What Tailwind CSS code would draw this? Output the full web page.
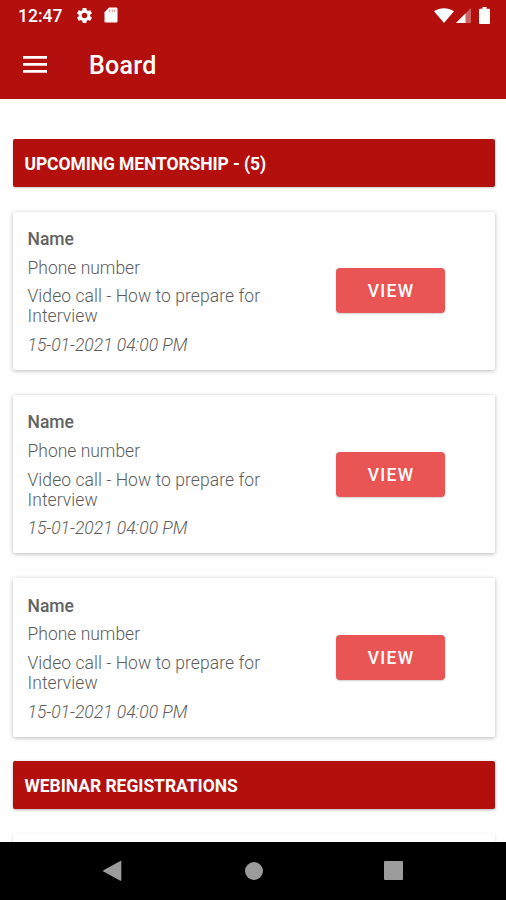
<!DOCTYPE html>
<html lang="en">
<head>
<meta charset="utf-8">
<title>Board</title>
<script src="https://cdn.jsdelivr.net/npm/@tailwindcss/browser@4"></script>
</head>
<body class="flex h-[900px] w-[506px] flex-col overflow-hidden bg-[#fefefe] font-[Roboto,sans-serif]">
<header class="h-[98.5px] shrink-0 bg-[#b30f0d] text-white">
  <div class="flex h-8 items-center pl-[18px] pr-[16px]">
    <span class="w-[57px] text-[17.5px] font-medium leading-8 whitespace-nowrap">12:47</span>
    <svg class="relative -top-px size-[19px]" viewBox="0 0 24 24" fill="currentColor"><path d="M19.14 12.94c.04-.3.06-.61.06-.94 0-.32-.02-.64-.07-.94l2.03-1.58c.18-.14.23-.41.12-.61l-1.92-3.32c-.12-.22-.37-.29-.59-.22l-2.39.96c-.5-.38-1.03-.7-1.62-.94l-.36-2.54c-.04-.24-.24-.41-.48-.41h-3.84c-.24 0-.43.17-.47.41l-.36 2.54c-.59.24-1.13.57-1.62.94l-2.39-.96c-.22-.08-.47 0-.59.22L2.74 8.87c-.12.21-.08.47.12.61l2.03 1.58c-.05.3-.09.63-.09.94s.02.64.07.94l-2.03 1.58c-.18.14-.23.41-.12.61l1.92 3.32c.12.22.37.29.59.22l2.39-.96c.5.38 1.03.7 1.62.94l.36 2.54c.05.24.24.41.48.41h3.84c.24 0 .44-.17.47-.41l.36-2.54c.59-.24 1.13-.56 1.62-.94l2.39.96c.22.08.47 0 .59-.22l1.92-3.32c.12-.22.07-.47-.12-.61l-2.01-1.58zM12 15.6c-1.98 0-3.6-1.62-3.6-3.6s1.62-3.6 3.6-3.6 3.6 1.62 3.6 3.6-1.62 3.6-3.6 3.6z"/></svg>
    <svg class="relative -top-px ml-[9.5px] h-4 w-[14px]" viewBox="0 0 14 16"><path d="M5 .5h7.200a1.300 1.300 0 0 1 1.300 1.300v12.400a1.300 1.300 0 0 1-1.300 1.300H1.800a1.300 1.300 0 0 1-1.300-1.300V5.300z" fill="currentColor"/><path d="M5.800 2.500v2.700M8.300 2.500v2.700M10.800 2.500v2.700" stroke="#b30f0d" stroke-opacity=".5" stroke-width="1"/></svg>
    <svg class="relative -top-px ml-auto h-[15px] w-[20px]" viewBox="0 0 20 15"><path d="M0 3.200C6-.8 14-.8 20 3.200L10 15z" fill="currentColor"/></svg>
    <svg class="relative -top-px ml-[2.500px] size-[15px]" viewBox="0 0 15 15" fill="currentColor"><path d="M15 0v15H0z" opacity=".35"/><path d="M9.500 5.500V15H0z"/></svg>
    <svg class="relative -top-px ml-2 h-[17px] w-[11px]" viewBox="0 0 11 17"><path d="M3.500 0h4v1.700H10a1 1 0 0 1 1 1V16a1 1 0 0 1-1 1H1a1 1 0 0 1-1-1V2.700a1 1 0 0 1 1-1h2.500z" fill="currentColor"/></svg>
  </div>
  <div class="flex h-[66px] items-center pl-[23px]">
    <svg class="h-[18px] w-6" viewBox="0 0 24 18" fill="currentColor"><path d="M0 0h24v2.700H0zM0 7h24v2.700H0zM0 14h24v2.700H0z"/></svg>
    <h1 class="ml-[42px] pt-[2px] text-[25px] font-medium leading-[30px] tracking-[0.300px]">Board</h1>
  </div>
</header>
<main class="flex min-h-0 flex-1 flex-col overflow-hidden px-[12.500px] pt-[40.500px] text-[17.500px] leading-5 text-[#5c5c5c]">
  <h2 class="mb-[25px] flex h-[47.500px] w-[482px] shrink-0 items-center rounded-[2px] bg-[#b30f0d] pl-3 pt-[2.500px] font-bold tracking-[-0.100px] text-white shadow-[0_1px_2px_rgba(0,0,0,0.2)]">UPCOMING MENTORSHIP - (5)</h2>
  <div class="flex flex-col gap-[25px]">
    <article class="flex h-[158.400px] w-[482px] shrink-0 items-center rounded-[2px] bg-white pl-[15px] shadow-[0_1px_4px_rgba(0,0,0,0.28)]">
      <div class="flex w-[308.500px] flex-col gap-[8.600px] pt-[2.500px]"><p class="font-medium text-[#636363]">Name</p><p class="font-light">Phone number</p><p class="font-light tracking-[0.060px]">Video call - How to prepare for<br>Interview</p><p class="font-light italic">15-01-2021 04:00 PM</p></div>
      <button class="h-[45px] w-[109px] rounded-[4px] bg-[#e95455] pl-px pt-px font-medium tracking-[1.300px] text-white shadow-[0_1px_2px_rgba(0,0,0,0.2)]">VIEW</button>
    </article>
    <article class="flex h-[158.400px] w-[482px] shrink-0 items-center rounded-[2px] bg-white pl-[15px] shadow-[0_1px_4px_rgba(0,0,0,0.28)]">
      <div class="flex w-[308.500px] flex-col gap-[8.600px] pt-[2.500px]"><p class="font-medium text-[#636363]">Name</p><p class="font-light">Phone number</p><p class="font-light tracking-[0.060px]">Video call - How to prepare for<br>Interview</p><p class="font-light italic">15-01-2021 04:00 PM</p></div>
      <button class="h-[45px] w-[109px] rounded-[4px] bg-[#e95455] pl-px pt-px font-medium tracking-[1.300px] text-white shadow-[0_1px_2px_rgba(0,0,0,0.2)]">VIEW</button>
    </article>
    <article class="flex h-[158.400px] w-[482px] shrink-0 items-center rounded-[2px] bg-white pl-[15px] shadow-[0_1px_4px_rgba(0,0,0,0.28)]">
      <div class="flex w-[308.500px] flex-col gap-[8.600px] pt-[2.500px]"><p class="font-medium text-[#636363]">Name</p><p class="font-light">Phone number</p><p class="font-light tracking-[0.060px]">Video call - How to prepare for<br>Interview</p><p class="font-light italic">15-01-2021 04:00 PM</p></div>
      <button class="h-[45px] w-[109px] rounded-[4px] bg-[#e95455] pl-px pt-px font-medium tracking-[1.300px] text-white shadow-[0_1px_2px_rgba(0,0,0,0.2)]">VIEW</button>
    </article>
  </div>
  <h2 class="mb-[25px] mt-[24.500px] flex h-[47.500px] w-[482px] shrink-0 items-center rounded-[2px] bg-[#b30f0d] pl-3 pt-[2.500px] font-bold tracking-[-0.040px] text-white shadow-[0_1px_3px_rgba(0,0,0,0.3)]">WEBINAR REGISTRATIONS</h2>
  <div class="h-[158px] w-[482px] shrink-0 rounded-[2px] bg-white shadow-[0_1px_3px_rgba(0,0,0,0.15)]"></div>
</main>
<nav class="flex h-[58.500px] shrink-0 items-center bg-black text-[#9b9b9b]">
  <svg class="ml-[102px] h-[22px] w-5" viewBox="0 0 20 22" fill="currentColor"><path d="M1.500 10.200 18.300.9Q19.300.4 19.300 1.500v18.600q0 1.100-1 .6L1.500 11.500q-1-.6 0-1.300z"/></svg>
  <span class="ml-[122.500px] size-[18px] rounded-full bg-[#9b9b9b]"></span>
  <span class="ml-[121px] size-[19px] rounded-[1px] bg-[#9b9b9b]"></span>
</nav>
</body>
</html>
